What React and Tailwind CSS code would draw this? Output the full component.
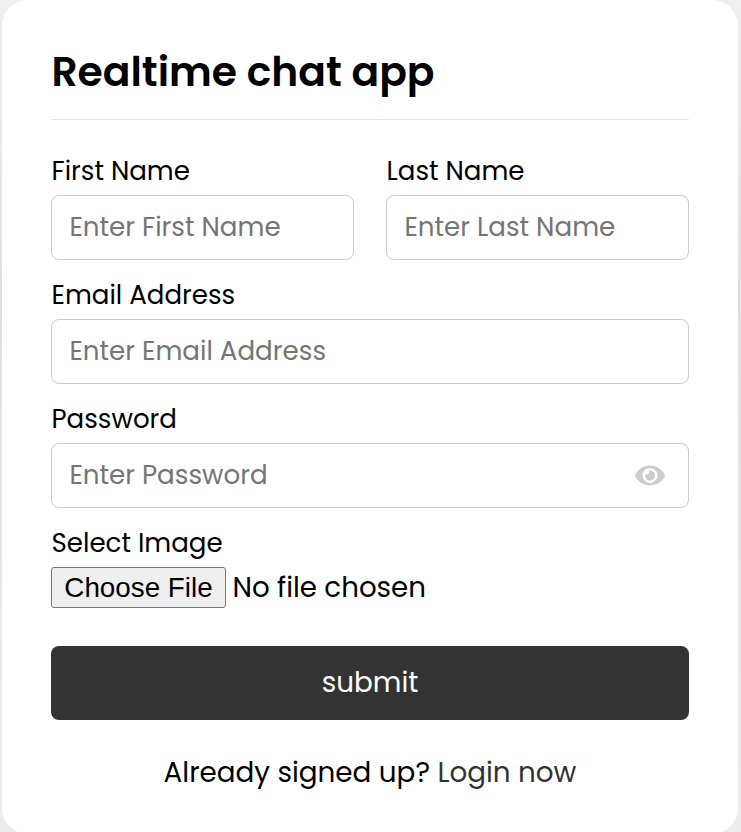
import { FaEye } from "react-icons/fa";

function Field({ label, placeholder, type = "text", children }) {
  return (
    <label className="flex min-w-0 flex-1 flex-col">
      <span className="h-[39px] pl-[0.5px] text-[26.1px] leading-[39px]">{label}</span>
      <span className="mt-1 flex h-[65px] items-center rounded-[8px] border border-[#cccccc] pr-[23.5px] pl-[17.4px]">
        <input
          type={type}
          placeholder={placeholder}
          className="h-full w-full min-w-0 bg-transparent text-[26.15px] outline-none placeholder:text-[#757575]"
        />
        {children}
      </span>
    </label>
  );
}

export default function App() {
  return (
    <div className="h-[832px] w-[741px] overflow-hidden bg-linear-to-b from-[#f0f0f0] via-[#e0e0e0] via-35% to-[#ededed] pl-[2px] font-['Poppins',sans-serif] text-black">
      <main className="h-[834px] w-[736px] rounded-[26px] bg-white px-[49px] pt-[41px]">
        <h1 className="h-[79px] border-b border-[#e6e6e6] pl-[0.4px] text-[40.85px] leading-[62px] font-semibold">Realtime chat app</h1>
        <form className="mt-8">
          <div className="flex gap-8">
            <Field label="First Name" placeholder="Enter First Name" />
            <Field label="Last Name" placeholder="Enter Last Name" />
          </div>
          <div className="mt-4 flex">
            <Field label="Email Address" placeholder="Enter Email Address" />
          </div>
          <div className="mt-4 flex">
            <Field label="Password" placeholder="Enter Password" type="password">
              <FaEye className="h-[27px] w-[30px] shrink-0 text-[#cccccc]" />
            </Field>
          </div>
          <div className="mt-4 pl-[0.5px] text-[26.1px] leading-[39px]">Select Image</div>
          <div className="mt-1 flex h-[41px] items-center gap-[6.5px] text-[27.7px]">
            <button type="button" className="h-[41px] w-[175px] rounded-[3px] border border-[#767676] bg-[#efefef] font-['Liberation_Sans',sans-serif] text-[27.8px] leading-[38px] whitespace-nowrap">Choose File</button>
            <span>No file chosen</span>
          </div>
          <button type="button" className="mt-[38px] block h-[74px] w-full rounded-[8px] bg-[#333333] text-[27.8px] text-white">submit</button>
        </form>
        <p className="mt-8 text-center text-[27.8px] leading-[42px]">
          Already signed up? <a href="#login" className="text-[#333333]">Login now</a>
        </p>
      </main>
    </div>
  );
}
